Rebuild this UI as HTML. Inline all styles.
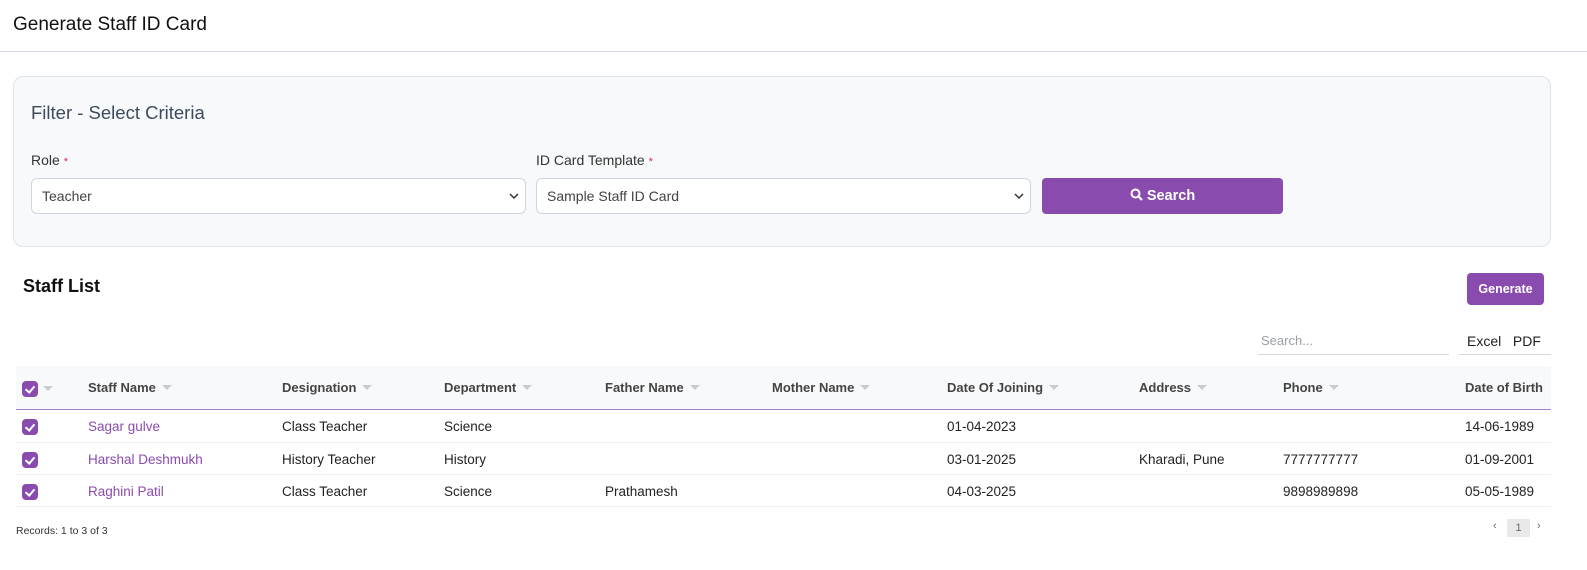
<!DOCTYPE html><html><head><style>
*{box-sizing:border-box;margin:0;padding:0}
body{width:1587px;height:570px;background:#fff;font-family:"Liberation Sans",sans-serif;position:relative;overflow:hidden;color:#212529}
.a{position:absolute;white-space:nowrap}
.sel{position:absolute;top:178px;height:36px;background:#fff;border:1px solid #cfd6df;border-radius:6px;font-size:14px;color:#444;padding:9px 10px}
.sel svg{position:absolute;right:6px;top:13px}
.cb{position:absolute;left:22px;width:16px;height:16px;background:#8a4baf;border-radius:4px}
.cb:after{content:"";position:absolute;left:5px;top:3px;width:4px;height:7px;border:solid #fff;border-width:0 2px 2px 0;transform:rotate(40deg)}
.th{position:absolute;top:380px;font-size:13px;font-weight:bold;color:#444}
.th i,.car{display:inline-block;width:0;height:0;border-left:5px solid transparent;border-right:5px solid transparent;border-top:5px solid #c8ccd2;margin-left:6px;vertical-align:2px}
.td{position:absolute;font-size:13.5px;color:#222}
.nm{color:#8a4baf}
.row{position:absolute;left:16px;width:1535px;border-bottom:1px solid #eceef1}
</style></head><body>
<div class="a" style="left:13px;top:14px;font-size:19px;color:#111">Generate Staff ID Card</div>
<div class="a" style="left:0;top:51px;width:1587px;height:1px;background:#cfd8e3"></div>
<div class="a" style="left:13px;top:76px;width:1538px;height:171px;background:#f8f9fb;border:1px solid #dde4ec;border-radius:10px"></div>
<div class="a" style="left:31px;top:102px;font-size:18.5px;color:#3d4b5e">Filter - Select Criteria</div>
<div class="a" style="left:31px;top:152px;font-size:14px;color:#333">Role <span style="color:#e0245e;font-size:11px">*</span></div>
<div class="a" style="left:536px;top:152px;font-size:14px;color:#333">ID Card Template <span style="color:#e0245e;font-size:11px">*</span></div>
<div class="sel" style="left:31px;width:495px">Teacher<svg width="10" height="8" viewBox="0 0 10 8"><path d="M1 2l4 4 4-4" stroke="#333" stroke-width="1.5" fill="none"/></svg></div>
<div class="sel" style="left:536px;width:495px">Sample Staff ID Card<svg width="10" height="8" viewBox="0 0 10 8"><path d="M1 2l4 4 4-4" stroke="#333" stroke-width="1.5" fill="none"/></svg></div>
<div class="a" style="left:1042px;top:178px;width:241px;height:36px;background:#8a4baf;border-radius:4px;color:#fff;font-size:14.5px;font-weight:bold;text-align:center;line-height:36px"><svg width="13" height="13" viewBox="0 0 13 13" style="vertical-align:-1px"><circle cx="5.5" cy="5.5" r="4" stroke="#fff" stroke-width="2" fill="none"/><path d="M8.5 8.5l3.5 3.5" stroke="#fff" stroke-width="2.2"/></svg> Search</div>
<div class="a" style="left:23px;top:276px;font-size:18px;font-weight:bold;color:#111">Staff List</div>
<div class="a" style="left:1467px;top:273px;width:77px;height:32px;background:#8a4baf;border-radius:4px;color:#fff;font-size:12.5px;font-weight:bold;text-align:center;line-height:32px">Generate</div>
<div class="a" style="left:1258px;top:333px;width:191px;height:22px;border-bottom:1px solid #d5d8dc;font-size:13px;color:#9aa0a6;padding-left:3px">Search...</div>
<div class="a" style="left:1459px;top:333px;width:92px;height:22px;border-bottom:1px solid #d5d8dc;font-size:14px;color:#222;padding-left:8px">Excel&nbsp;&nbsp; PDF</div>
<div class="a" style="left:16px;top:366px;width:1535px;height:44px;background:#f8f9fb;border-bottom:1px solid #a77fc4"></div>
<div class="cb" style="top:381px"></div><span class="car a" style="left:37px;top:386px"></span>
<div class="th" style="left:88px">Staff Name<i></i></div>
<div class="th" style="left:282px">Designation<i></i></div>
<div class="th" style="left:444px">Department<i></i></div>
<div class="th" style="left:605px">Father Name<i></i></div>
<div class="th" style="left:772px">Mother Name<i></i></div>
<div class="th" style="left:947px">Date Of Joining<i></i></div>
<div class="th" style="left:1139px">Address<i></i></div>
<div class="th" style="left:1283px">Phone<i></i></div>
<div class="th" style="left:1465px">Date of Birth</div>
<div class="row" style="top:410px;height:33px"></div>
<div class="row" style="top:443px;height:32px"></div>
<div class="row" style="top:475px;height:32px"></div>
<div class="cb" style="top:419px"></div><div class="cb" style="top:452px"></div><div class="cb" style="top:484px"></div>
<div class="td nm" style="left:88px;top:419px">Sagar gulve</div>
<div class="td" style="left:282px;top:419px">Class Teacher</div>
<div class="td" style="left:444px;top:419px">Science</div>
<div class="td" style="left:947px;top:419px">01-04-2023</div>
<div class="td" style="left:1465px;top:419px">14-06-1989</div>
<div class="td nm" style="left:88px;top:452px">Harshal Deshmukh</div>
<div class="td" style="left:282px;top:452px">History Teacher</div>
<div class="td" style="left:444px;top:452px">History</div>
<div class="td" style="left:947px;top:452px">03-01-2025</div>
<div class="td" style="left:1139px;top:452px">Kharadi, Pune</div>
<div class="td" style="left:1283px;top:452px">7777777777</div>
<div class="td" style="left:1465px;top:452px">01-09-2001</div>
<div class="td nm" style="left:88px;top:484px">Raghini Patil</div>
<div class="td" style="left:282px;top:484px">Class Teacher</div>
<div class="td" style="left:444px;top:484px">Science</div>
<div class="td" style="left:605px;top:484px">Prathamesh</div>
<div class="td" style="left:947px;top:484px">04-03-2025</div>
<div class="td" style="left:1283px;top:484px">9898989898</div>
<div class="td" style="left:1465px;top:484px">05-05-1989</div>
<div class="a" style="left:16px;top:525px;font-size:10.5px;color:#333">Records: 1 to 3 of 3</div>
<div class="a" style="left:1493px;top:520px;font-size:11px;color:#667">‹</div>
<div class="a" style="left:1507px;top:519px;width:23px;height:18px;background:#e9e9ea;font-size:11px;color:#667;text-align:center;line-height:18px">1</div>
<div class="a" style="left:1537px;top:520px;font-size:11px;color:#667">›</div>
</body></html>
